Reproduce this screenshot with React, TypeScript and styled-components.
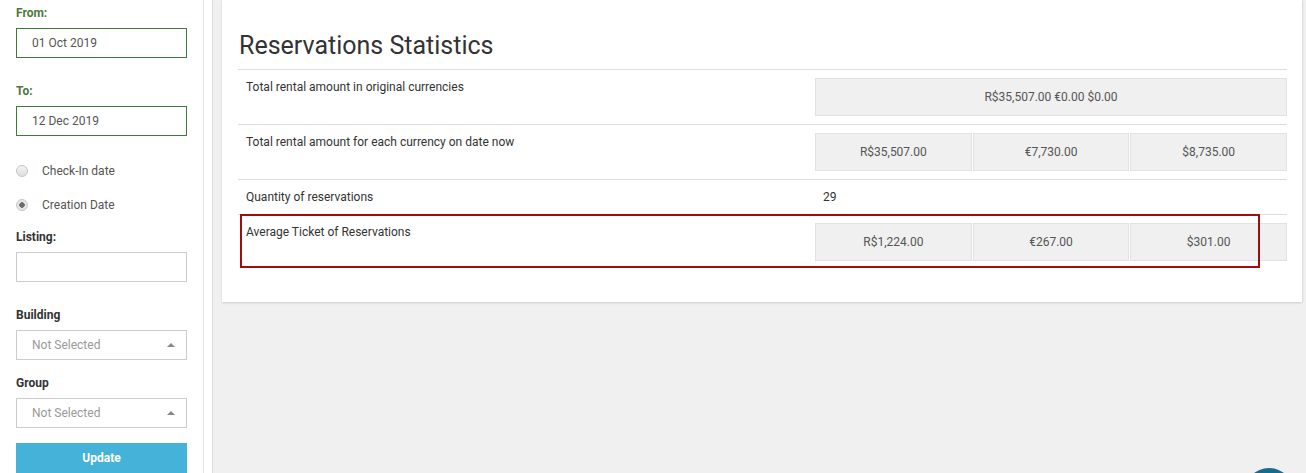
import React from 'react';
import styled, { createGlobalStyle } from 'styled-components';

const GlobalStyle = createGlobalStyle`
  html, body {
    margin: 0;
    padding: 0;
    height: 473px;
    overflow: hidden;
    background: #f0f0f0;
    font-family: 'Roboto', 'Liberation Sans', Arial, sans-serif;
  }
`;

const Page = styled.div`
  display: flex;
  height: 473px;
  overflow: hidden;
  position: relative;
  background: #f0f0f0;
`;

const Sidebar = styled.aside`
  width: 204px;
  flex: 0 0 auto;
  background: #ffffff;
  border-right: 1px solid #e2e2e2;
  padding: 6px 16px 0 16px;
  box-sizing: border-box;
  display: flex;
  flex-direction: column;

  & > * {
    flex-shrink: 0;
  }
`;

const Gutter = styled.div`
  width: 8px;
  flex: 0 0 auto;
  background: #ffffff;
  border-right: 1px solid #dcdcdc;
`;

const Main = styled.main`
  flex: 1 1 auto;
  padding: 0 4px 0 9px;
  position: relative;
`;

const FieldLabel = styled.div<{ $green?: boolean }>`
  font-size: 12px;
  font-weight: 700;
  line-height: 14px;
  color: ${(p) => (p.$green ? '#4b7a3c' : '#333333')};
  margin-bottom: 8px;
`;

const TextBox = styled.div<{ $green?: boolean }>`
  height: 30px;
  box-sizing: border-box;
  border: 1px solid ${(p) => (p.$green ? '#3f7a3a' : '#cccccc')};
  padding: 0 15px;
  display: flex;
  align-items: center;
  font-size: 12px;
  color: #555555;
  margin-bottom: ${(p) => (p.$green ? '26px' : '0')};
`;

const RadioGroup = styled.div`
  display: flex;
  flex-direction: column;
  gap: 22px;
  margin: 3px 0 19px;
`;

const RadioRow = styled.label`
  display: flex;
  align-items: center;
  gap: 14px;
  font-size: 12px;
  color: #555555;
  line-height: 12px;
`;

const RadioDot = styled.span<{ $checked?: boolean }>`
  width: 12px;
  height: 12px;
  border-radius: 50%;
  box-sizing: border-box;
  border: 1px solid #c6c6c6;
  background: ${(p) =>
    p.$checked
      ? 'radial-gradient(circle, #6b6b6b 0 2.5px, #e6e6e6 3px)'
      : 'linear-gradient(#f3f3f3, #dedede)'};
`;

const Select = styled.div`
  height: 30px;
  box-sizing: border-box;
  border: 1px solid #cccccc;
  padding: 0 11px 0 15px;
  display: flex;
  align-items: center;
  justify-content: space-between;
  font-size: 12px;
  color: #999999;
  margin-bottom: 16px;
`;

const Caret = styled.span`
  width: 0;
  height: 0;
  border-left: 4px solid transparent;
  border-right: 4px solid transparent;
  border-bottom: 4px solid #888888;
`;

const Spacer = styled.div<{ $h: number }>`
  height: ${(p) => p.$h}px;
`;

const UpdateButton = styled.button`
  height: 30px;
  border: none;
  background: #45b3d9;
  color: #ffffff;
  font-family: inherit;
  font-size: 12px;
  font-weight: 700;
  margin-top: -1px;
`;

const Card = styled.section`
  background: #ffffff;
  box-shadow: 0 1px 2px rgba(0, 0, 0, 0.12), 1px 0 2px rgba(0, 0, 0, 0.06);
  padding: 31px 15px 33px 16px;
  position: relative;
`;

const Title = styled.h2`
  margin: 0 0 9px 1px;
  font-size: 25px;
  font-weight: 400;
  line-height: 29px;
  color: #333333;
`;

const Table = styled.div`
  border-top: 1px solid #dddddd;
  width: 1049px;
`;

const Row = styled.div<{ $last?: boolean }>`
  display: grid;
  grid-template-columns: 569px 1fr;
  border-bottom: ${(p) => (p.$last ? 'none' : '1px solid #dddddd')};
`;

const Label = styled.div`
  padding: 9px 8px 8px 8px;
  font-size: 12px;
  line-height: 16px;
  color: #333333;
`;

const ValueCell = styled.div`
  padding: 8px 0 8px 8px;
  display: flex;
  align-items: flex-start;
  font-size: 12px;
  color: #333333;
`;

const Plain = styled.div`
  line-height: 18px;
  padding-left: 8px;
`;

const Boxes = styled.div`
  flex: 1;
  display: flex;
  gap: 1px;
  background: #ffffff;
`;

const Box = styled.div`
  flex: 1;
  height: 38px;
  box-sizing: border-box;
  background: #f0f0f0;
  border: 1px solid #e2e2e2;
  display: flex;
  align-items: center;
  justify-content: center;
  font-size: 12px;
  color: #555555;
`;

const Highlight = styled.div`
  position: absolute;
  left: 18px;
  top: 214px;
  width: 1020px;
  height: 54px;
  box-sizing: border-box;
  border: 2px solid #a00d0d;
  pointer-events: none;
`;

const ChatBubble = styled.div`
  position: absolute;
  left: 1244px;
  top: 468px;
  width: 50px;
  height: 50px;
  border-radius: 50%;
  background: #176b8e;
`;

type StatRow = { label: string; values: string[]; plain?: boolean };

const rows: StatRow[] = [
  { label: 'Total rental amount in original currencies', values: ['R$35,507.00 €0.00 $0.00'] },
  { label: 'Total rental amount for each currency on date now', values: ['R$35,507.00', '€7,730.00', '$8,735.00'] },
  { label: 'Quantity of reservations', values: ['29'], plain: true },
  { label: 'Average Ticket of Reservations', values: ['R$1,224.00', '€267.00', '$301.00'] },
];

export default function App() {
  return (
    <>
      <GlobalStyle />
      <Page>
        <Sidebar>
          <FieldLabel $green>From:</FieldLabel>
          <TextBox $green>01 Oct 2019</TextBox>
          <FieldLabel $green>To:</FieldLabel>
          <TextBox $green>12 Dec 2019</TextBox>
          <RadioGroup>
            <RadioRow>
              <RadioDot />
              Check-In date
            </RadioRow>
            <RadioRow>
              <RadioDot $checked />
              Creation Date
            </RadioRow>
          </RadioGroup>
          <FieldLabel>Listing:</FieldLabel>
          <TextBox />
          <Spacer $h={26} />
          <FieldLabel>Building</FieldLabel>
          <Select>
            Not Selected
            <Caret />
          </Select>
          <FieldLabel>Group</FieldLabel>
          <Select>
            Not Selected
            <Caret />
          </Select>
          <UpdateButton>Update</UpdateButton>
        </Sidebar>
        <Gutter />
        <Main>
          <Card>
            <Title>Reservations Statistics</Title>
            <Table>
              {rows.map((r, i) => (
                <Row key={r.label} $last={i === rows.length - 1}>
                  <Label>{r.label}</Label>
                  <ValueCell>
                    {r.plain ? (
                      <Plain>{r.values[0]}</Plain>
                    ) : (
                      <Boxes>
                        {r.values.map((v) => (
                          <Box key={v}>{v}</Box>
                        ))}
                      </Boxes>
                    )}
                  </ValueCell>
                </Row>
              ))}
            </Table>
            <Highlight />
          </Card>
        </Main>
        <ChatBubble />
      </Page>
    </>
  );
}
